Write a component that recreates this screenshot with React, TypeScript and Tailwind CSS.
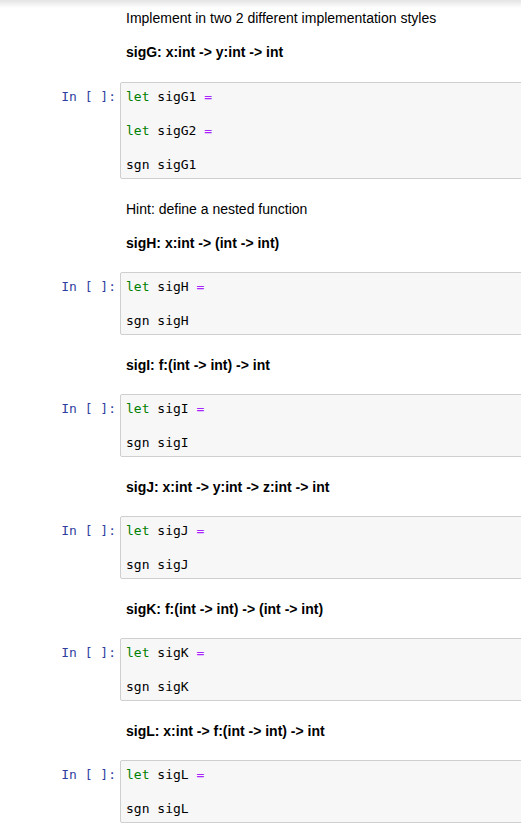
import React from "react";

const mono = { fontFamily: '"DejaVu Sans Mono", monospace' };

type Line = { kw?: string; name?: string; op?: boolean; text?: string };

function CodeLine({ l }: { l: Line }) {
  if (l.text !== undefined) {
    return <div className="h-[17px] leading-[17px] whitespace-pre">{l.text}</div>;
  }
  if (!l.kw) return <div className="h-[17px]" />;
  return (
    <div className="h-[17px] leading-[17px] whitespace-pre">
      <span className="text-[#008000]">{l.kw}</span>
      <span className="text-[#000]"> {l.name} </span>
      {l.op && <span className="text-[#AA22FF]">=</span>}
    </div>
  );
}

function CodeCell({ lines }: { lines: Line[] }) {
  return (
    <div className="flex items-start">
      <div
        className="w-[120px] shrink-0 pr-[4px] pt-[6px] text-right text-[13px] leading-[17px] text-[#303F9F]"
        style={mono}
      >
        In [ ]:
      </div>
      <div
        className="flex-1 mr-[-20px] border border-[#cfcfcf] rounded-[2px] bg-[#f7f7f7] pl-[5px] pt-[5px] pb-[5px] text-[13px] text-black"
        style={mono}
      >
        {lines.map((l, i) => (
          <CodeLine key={i} l={l} />
        ))}
      </div>
    </div>
  );
}

function Md({ paras }: { paras: { t: string; b?: boolean }[] }) {
  return (
    <div className="pl-[126px] pt-[20px] pb-[19px]">
      {paras.map((p, i) => (
        <p
          key={i}
          className={
            "text-[14px] leading-[20px] text-black " +
            (p.b ? "font-bold " : "") +
            (i < paras.length - 1 ? "mb-[14px]" : "")
          }
        >
          {p.t}
        </p>
      ))}
    </div>
  );
}

export default function App() {
  const sans = { fontFamily: '"Liberation Sans", Arial, sans-serif' };
  const simple = (n: string): Line[] => [
    { kw: "let", name: n, op: true },
    {},
    { text: "sgn " + n },
  ];
  return (
    <div className="w-[521px] h-[827px] overflow-hidden bg-white" style={sans}>
      <div className="h-[8px] bg-gradient-to-b from-[#e4e4e4] to-white" />
      <div className="pl-[126px] pb-[20px]">
        <p className="text-[14px] leading-[20px] text-black mb-[14px]">
          Implement in two 2 different implementation styles
        </p>
        <p className="text-[14px] leading-[20px] text-black font-bold">
          sigG: x:int -&gt; y:int -&gt; int
        </p>
      </div>
      <CodeCell
        lines={[
          { kw: "let", name: "sigG1", op: true },
          {},
          { kw: "let", name: "sigG2", op: true },
          {},
          { text: "sgn sigG1" },
        ]}
      />
      <Md
        paras={[
          { t: "Hint: define a nested function" },
          { t: "sigH: x:int -> (int -> int)", b: true },
        ]}
      />
      <CodeCell lines={simple("sigH")} />
      <Md paras={[{ t: "sigI: f:(int -> int) -> int", b: true }]} />
      <CodeCell lines={simple("sigI")} />
      <Md paras={[{ t: "sigJ: x:int -> y:int -> z:int -> int", b: true }]} />
      <CodeCell lines={simple("sigJ")} />
      <Md paras={[{ t: "sigK: f:(int -> int) -> (int -> int)", b: true }]} />
      <CodeCell lines={simple("sigK")} />
      <Md paras={[{ t: "sigL: x:int -> f:(int -> int) -> int", b: true }]} />
      <CodeCell lines={simple("sigL")} />
    </div>
  );
}
